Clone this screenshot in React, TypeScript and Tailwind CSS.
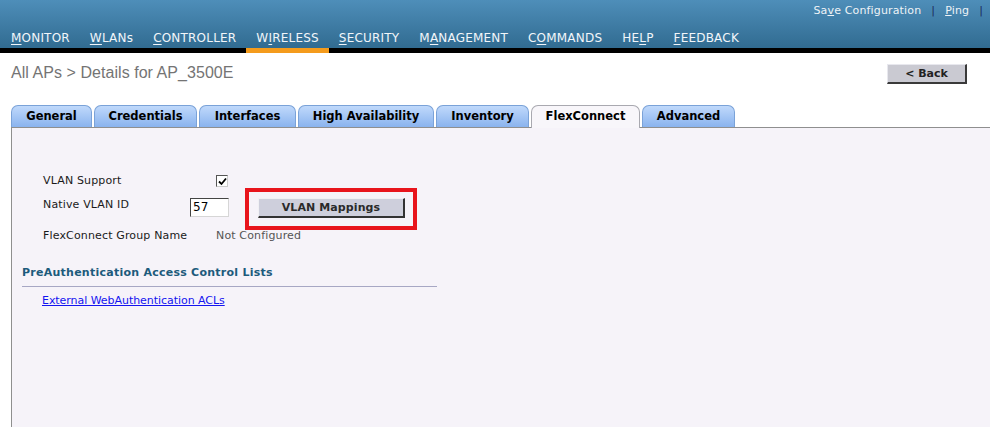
import React from "react";

const navItems: { pre: string; u: string; post: string; active?: boolean }[] = [
  { pre: "", u: "M", post: "ONITOR" },
  { pre: "", u: "W", post: "LANs" },
  { pre: "", u: "C", post: "ONTROLLER" },
  { pre: "W", u: "I", post: "RELESS", active: true },
  { pre: "", u: "S", post: "ECURITY" },
  { pre: "M", u: "A", post: "NAGEMENT" },
  { pre: "C", u: "O", post: "MMANDS" },
  { pre: "HE", u: "L", post: "P" },
  { pre: "", u: "F", post: "EEDBACK" },
];

const tabs: { label: string; w: string; active?: boolean }[] = [
  { label: "General", w: "w-[81px]" },
  { label: "Credentials", w: "w-[103px]" },
  { label: "Interfaces", w: "w-[97px]" },
  { label: "High Availability", w: "w-[136px]" },
  { label: "Inventory", w: "w-[93px]" },
  { label: "FlexConnect", w: "w-[109px]", active: true },
  { label: "Advanced", w: "w-[93px]" },
];

export default function App() {
  return (
    <div
      className="w-[990px] h-[427px] overflow-hidden bg-white flex flex-col"
      style={{ fontFamily: '"DejaVu Sans", Verdana, sans-serif' }}
    >
      {/* Header */}
      <div className="bg-linear-to-b from-[#4e8eb9] to-[#2e688d] flex flex-col">
        <div className="h-[21px] flex items-center justify-end pr-[7px] text-[11px] text-[#eef3f7] leading-[14px] tracking-[0.15px]">
          <span>
            Sa<span className="underline">v</span>e Configuration
          </span>
          <span className="mx-[10px] text-[#1c2c5c]">|</span>
          <span>
            <span className="underline">P</span>ing
          </span>
          <span className="ml-[10px] text-[#1c2c5c]">|</span>
        </div>
        <ul className="flex h-[32px] pl-[1px] border-b-[5px] border-black items-end">
          {navItems.map((n, i) => (
            <li
              key={i}
              className={
                "px-[10px] pb-[3px] text-[12px] leading-[14px] tracking-[0.2px] text-[#f2f6fa] " +
                (n.active ? "border-b-[5px] border-[#f49b1c] -mb-[5px]" : "")
              }
            >
              {n.pre}
              <span className="underline underline-offset-2">{n.u}</span>
              {n.post}
            </li>
          ))}
        </ul>
      </div>

      {/* Main */}
      <div className="flex-1 flex flex-col pl-[11px]">
        <div className="flex justify-between items-start pt-[11px] pr-[23px]">
          <div
            className="text-[16px] leading-[18px] text-[#747474] tracking-[0.05px]"
            style={{ fontFamily: '"Liberation Sans", Arial, sans-serif' }}
          >
            All APs &gt; Details for AP_3500E
          </div>
          <button className="w-[80px] h-[20px] bg-[#cacad2] border border-t-[#e8e8ee] border-l-[#e8e8ee] border-b-[2px] border-r-[2px] border-b-[#3a3a3a] border-r-[#3a3a3a] text-[11px] font-bold text-[#222] leading-[14px] flex items-center justify-center">
            &lt; Back
          </button>
        </div>

        {/* Tabs */}
        <div className="flex gap-[2px] mt-[21px] h-[22px] items-end relative z-10">
          {tabs.map((t) =>
            t.active ? (
              <div
                key={t.label}
                className={
                  t.w +
                  " h-[23px] -mb-px rounded-t-[7px] border border-b-0 border-[#a9a9b0] bg-[#f8f6fa] flex items-center justify-center text-[11.5px] font-bold text-black pb-px"
                }
              >
                {t.label}
              </div>
            ) : (
              <div
                key={t.label}
                className={
                  t.w +
                  " h-[22px] rounded-t-[7px] border border-b-0 border-[#7aa2d8] bg-linear-to-b from-[#c0d9fb] to-[#8ab3ee] flex items-center justify-center text-[11.5px] font-bold text-black"
                }
              >
                {t.label}
              </div>
            )
          )}
        </div>

        {/* Panel */}
        <div className="flex-1 border-l border-t border-[#8f8f8f] bg-[#f6f3f9] relative text-[11px] text-[#1a1a1a] tracking-[0.15px]">
          <div className="pt-[46px] flex flex-col">
            {/* Row 1 */}
            <div className="flex items-center h-[14px] pl-[31px]">
              <span className="w-[173px] leading-[14px]">VLAN Support</span>
              <span className="w-[12px] h-[12px] bg-white border border-t-[#555] border-l-[#555] border-b-[#ccc] border-r-[#ccc] flex items-center justify-center">
                <svg width="9" height="9" viewBox="0 0 9 9">
                  <path d="M1 4.5 L3.5 7 L8 1.5" stroke="#000" strokeWidth="1.8" fill="none" />
                </svg>
              </span>
            </div>
            {/* Row 2 */}
            <div className="flex items-center h-[21px] mt-[9px] pl-[31px]">
              <span className="w-[147px] leading-[14px] -mt-[6px]">Native VLAN ID</span>
              <span className="w-[39px] h-[19px] bg-white border border-t-[#444] border-l-[#444] border-b-[#d6d6d6] border-r-[#d6d6d6] text-[12px] leading-[17px] pl-[2px] text-black">
                57
              </span>
              <button className="ml-[29px] w-[147px] h-[20px] bg-[#cecfdc] border border-t-[#f0f0f4] border-l-[#f0f0f4] border-b-[2px] border-r-[2px] border-b-[#333] border-r-[#333] text-[11px] font-bold text-[#2a2a2a] flex items-center justify-center leading-[13px] tracking-[0.1px]">
                VLAN Mappings
              </button>
            </div>
            {/* Row 3 */}
            <div className="flex items-center h-[14px] mt-[11px] pl-[31px]">
              <span className="w-[173px] leading-[14px]">FlexConnect Group Name</span>
              <span className="leading-[14px] text-[#555]">Not Configured</span>
            </div>
            {/* Section header */}
            <div className="ml-[10px] w-[415px] mt-[23px] pb-[6px] border-b border-[#a7a7c4] text-[11px] font-bold leading-[14px] text-[#1d5b7c] tracking-[0.25px]">
              PreAuthentication Access Control Lists
            </div>
            <div className="mt-[7px] pl-[30px] leading-[14px]">
              <a className="underline text-[#1414f0] text-[11px] tracking-[-0.05px]" href="#">
                External WebAuthentication ACLs
              </a>
            </div>
          </div>

          {/* Annotation highlight */}
          <div className="absolute left-[233px] top-[60px] w-[172px] h-[42px] border-[4px] border-[#e8141c] pointer-events-none" />
        </div>
      </div>
    </div>
  );
}
